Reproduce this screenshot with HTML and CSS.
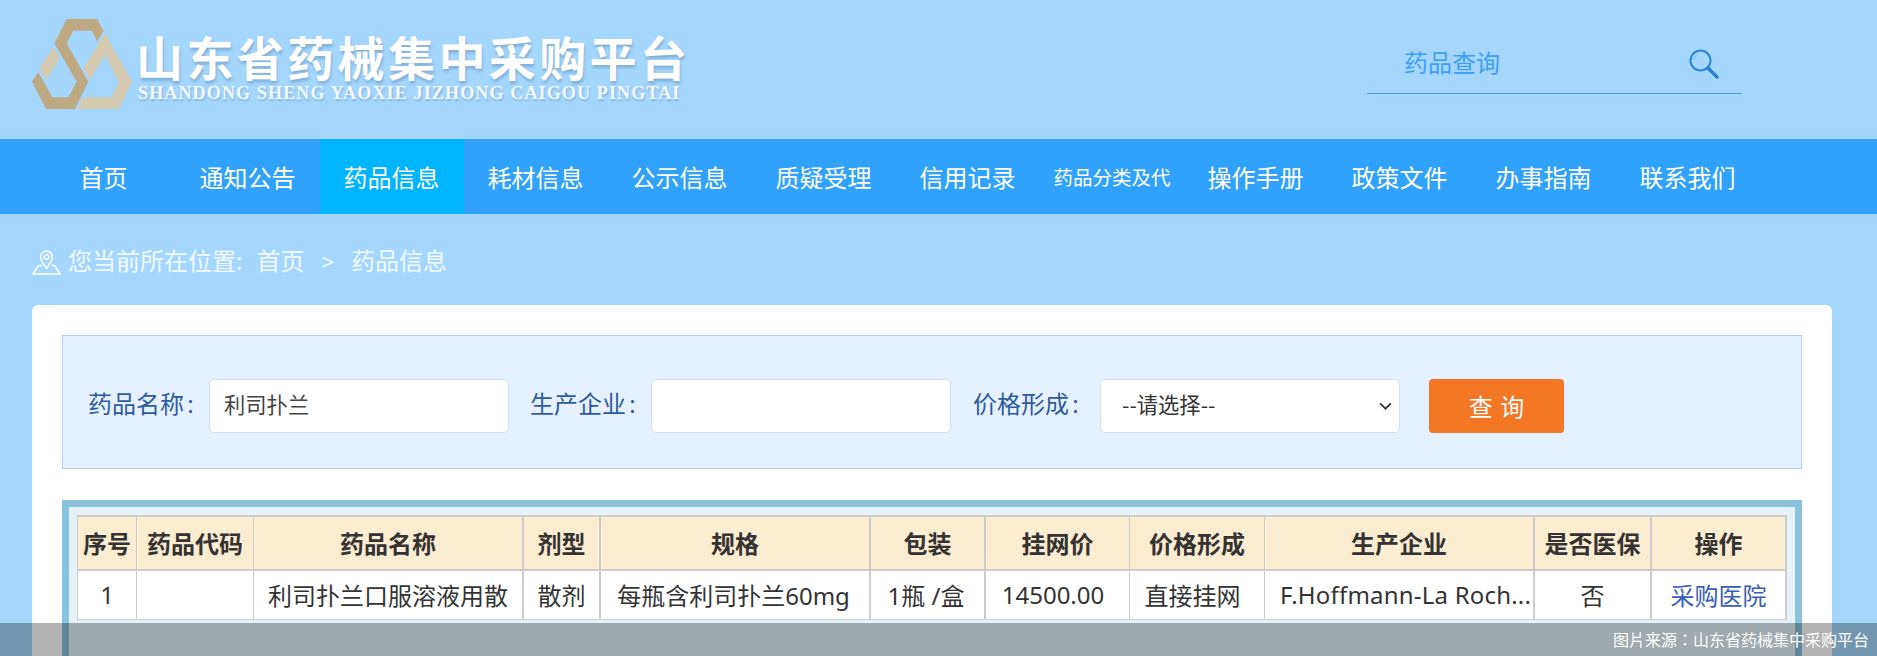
FILE: index.html
```html
<!DOCTYPE html>
<html lang="zh-CN">
<head>
<meta charset="utf-8">
<title>山东省药械集中采购平台</title>
<link rel="stylesheet" href="styles.css">
</head>
<body>
<div class="page">
  <header class="top">
    <div class="brand">
      <svg class="logo" viewBox="36 27 300 270" aria-hidden="true">
        <path class="logo-dark" d="M140 27L232 27L250 62L232 95L215 62L160 62L140 100L205 215L165 297L78 297L36 215L55 187L97 262L145 262L170 215L103 100Z"/>
        <path class="logo-light" d="M100 110L118 145L78 210L58 178Z"/>
        <path class="logo-light" d="M255 70L336 215L297 297L170 297L190 262L275 262L297 215L255 135L210 210L190 175Z"/>
      </svg>
      <div class="brand-text">
        <div class="brand-cn">山东省药械集中采购平台</div>
        <div class="brand-en">SHANDONG SHENG YAOXIE JIZHONG CAIGOU PINGTAI</div>
      </div>
    </div>
    <div class="site-search">
      <span class="site-search-text">药品查询</span>
      <svg class="search-icon" viewBox="0 0 30 30" aria-hidden="true">
        <circle cx="11.5" cy="11.5" r="10" fill="none" stroke="#2a87d8" stroke-width="2"/>
        <path d="M4.8 11A6.5 6.5 0 0 1 10 5.2" fill="none" stroke="#7dbdec" stroke-width="1"/>
        <path d="M19 19L28 28" fill="none" stroke="#2a7fcf" stroke-width="3.4" stroke-linecap="round"/>
      </svg>
    </div>
  </header>

  <nav class="nav">
    <a class="nav-item">首页</a>
    <a class="nav-item">通知公告</a>
    <a class="nav-item active">药品信息</a>
    <a class="nav-item">耗材信息</a>
    <a class="nav-item">公示信息</a>
    <a class="nav-item">质疑受理</a>
    <a class="nav-item">信用记录</a>
    <a class="nav-item small">药品分类及代</a>
    <a class="nav-item">操作手册</a>
    <a class="nav-item">政策文件</a>
    <a class="nav-item">办事指南</a>
    <a class="nav-item">联系我们</a>
  </nav>

  <div class="crumbs">
    <svg class="pin" viewBox="0 0 29 25" aria-hidden="true">
      <path d="M14.5 18.5C11 13.5 8.6 10.500 8.600 7A5.900 5.900 0 0 1 20.400 7C20.400 10.500 18 13.500 14.500 18.500Z" fill="none" stroke="#fff" stroke-width="1.500"/>
      <circle cx="14.500" cy="7" r="2.300" fill="none" stroke="#fff" stroke-width="1.300"/>
      <path d="M9.500 15.500H6.500L1 24H28L22.500 15.500H19.500" fill="none" stroke="#fff" stroke-width="1.500"/>
    </svg>
    <span class="crumb-lead">您当前所在位置:</span>
    <span class="crumb">首页</span>
    <span class="crumb-sep">&gt;</span>
    <span class="crumb">药品信息</span>
  </div>

  <main class="panel">
    <form class="filter">
      <label class="filter-label">药品名称 :</label>
      <input class="filter-input" type="text" value="利司扑兰">
      <label class="filter-label">生产企业 :</label>
      <input class="filter-input" type="text">
      <label class="filter-label wide">价格形成 :</label>
      <span class="select-wrap">
        <select class="filter-input filter-select"><option>--请选择--</option></select>
        <svg class="select-arrow" viewBox="0 0 12 7" aria-hidden="true"><path d="M1 1L6 6L11 1" fill="none" stroke="#333" stroke-width="1.600"/></svg>
      </span>
      <button class="filter-btn" type="button">查 询</button>
    </form>

    <section class="result">
      <table class="grid">
        <colgroup>
          <col class="c1"><col class="c2"><col class="c3"><col class="c4"><col class="c5"><col class="c6"><col class="c7"><col class="c8"><col class="c9"><col class="c10"><col class="c11">
        </colgroup>
        <thead>
          <tr>
            <th>序号</th><th>药品代码</th><th class="thick">药品名称</th><th class="thick">剂型</th><th class="thick">规格</th><th class="thick">包装</th><th>挂网价</th><th>价格形成</th><th class="thick">生产企业</th><th class="thick">是否医保</th><th class="thick">操作</th>
          </tr>
        </thead>
        <tbody>
          <tr>
            <td>1</td><td></td><td class="thick">利司扑兰口服溶液用散</td><td class="thick">散剂</td><td class="thick nudge">每瓶含利司扑兰60mg</td><td class="thick nudge">1瓶 /盒</td><td class="nudge-more">14500.00</td><td class="nudge-more">直接挂网</td><td class="thick clip">F.Hoffmann-La Roch...</td><td class="thick">否</td><td class="thick"><a class="row-link">采购医院</a></td>
          </tr>
        </tbody>
      </table>
    </section>
  </main>

  <div class="caption" lang="zh-TW">图片来源：山东省药械集中采购平台</div>
</div>
</body>
</html>
```

FILE: styles.css
```css
* { box-sizing: border-box; }
html, body { margin: 0; padding: 0; height: 656px; overflow: hidden; }
body { font-family: "Noto Sans", "Noto Sans CJK SC", sans-serif; background: #a5d7fe; color: #333; }
.page { position: relative; height: 656px; overflow: hidden; }

.top { height: 139px; display: flex; justify-content: space-between; padding: 19px 135px 0 32px; }
.brand { display: flex; align-items: flex-start; }
.logo { width: 100px; height: 90px; flex: none; }
.logo-dark { fill: #bfa983; }
.logo-light { fill: #d5cbb1; }
.brand-text { margin-left: 4px; padding-top: 11px; }
.brand-cn { font-family: "Noto Sans CJK SC", sans-serif; font-weight: 700; font-size: 47px; line-height: 52px; letter-spacing: 3.4px; color: #fff; white-space: nowrap; text-shadow: 1px 3px 3px rgba(90, 130, 170, .45); }
.brand-en { font-family: "Liberation Serif", serif; font-weight: 700; font-size: 18px; line-height: 20px; margin: 1px 0 0 2px; letter-spacing: 1.150px; color: #f4f9ff; white-space: nowrap; text-shadow: 1px 2px 2px rgba(90, 130, 170, .4); }

.site-search { width: 375px; height: 75px; padding: 26px 23px 0 37px; border-bottom: 1px solid #3c9ff0; display: flex; justify-content: space-between; align-items: flex-start; }
.site-search-text { font-size: 24px; line-height: 36px; color: #3d9ff6; }
.search-icon { width: 30px; height: 30px; margin-top: 4px; }

.nav { height: 75px; padding-left: 32px; background: #30a2fc; display: flex; }
.nav-item { width: 144px; padding-right: 1px; display: flex; align-items: center; justify-content: center; color: #fff; font-size: 24px; white-space: nowrap; }
.nav-item.active { background: #00b4ff; }
.nav-item.small { font-size: 19.500px; padding: 0; }

.crumbs { height: 91px; padding: 29px 0 0 32px; display: flex; align-items: flex-start; color: #f2f9ff; font-size: 24px; line-height: 36px; }
.pin { width: 29px; height: 25px; margin: 7px 7px 0 0; flex: none; }
.crumb-lead { margin-right: 14px; }
.crumb-sep { margin: 0 17px; font-size: 22px; }

.panel { margin: 0 45px 0 32px; height: 500px; padding: 30px 30px 0; background: #fff; border-radius: 6px 6px 0 0; }
.filter { height: 134px; padding: 8px 0 0 25px; display: flex; align-items: center; background: #e6f1ff; border: 1px solid #b1cdf6; }
.filter-label { width: 121px; flex: none; margin-bottom: 8px; font-size: 24px; word-spacing: -3px; color: #2c5c9e; white-space: nowrap; }
.filter-label.wide { width: 127px; margin-left: 1px; }
.filter-input { width: 300px; height: 54px; flex: none; margin-right: 21px; padding: 0 14px 6px; background: #fff; border: 1px solid #cfe0f7; border-radius: 5px; font-family: "Noto Sans CJK SC", sans-serif; font-size: 21.300px; color: #444; outline: none; }
.select-wrap { position: relative; display: block; flex: none; width: 300px; height: 54px; margin-right: 29px; }
.filter-select { display: block; margin: 0; padding-left: 21px; color: #333; appearance: none; -webkit-appearance: none; }
.select-arrow { position: absolute; right: 8px; top: 23px; width: 13px; height: 8px; }
.filter-btn { width: 135px; height: 54px; flex: none; padding: 0 0 2px; background: #f27623; color: #fff; border: 0; border-radius: 4px; font-family: "Noto Sans CJK SC", sans-serif; font-size: 24px; word-spacing: 2px; }

.result { margin-top: 31px; height: 300px; padding: 8px 8px 0 8px; background: #e6f2f8; border: 7px solid #8ac3de; }
.grid { width: 1709px; table-layout: fixed; border-collapse: separate; border-spacing: 0; border-top: 2px solid #ccc; border-left: 1px solid #ccc; font-size: 24px; }
.c1 { width: 59px; } .c2 { width: 117px; } .c3 { width: 270px; } .c4 { width: 77px; } .c5 { width: 270px; } .c6 { width: 115px; }
.c7 { width: 144px; } .c8 { width: 135px; } .c9 { width: 270px; } .c10 { width: 117px; } .c11 { width: 135px; }
.grid th, .grid td { padding: 0 0 2px; text-align: center; white-space: nowrap; border-right: 1px solid #ccc; color: #333; }
.grid th { height: 54px; background: #fcecd0; font-weight: 700; border-bottom: 2px solid #ccc; }
.grid td { height: 49px; background: #fff; border-bottom: 1px solid #ccc; }
.grid th.thick, .grid td.thick { border-right-width: 2px; }
.grid td.nudge { padding-right: 3px; }
.grid td.nudge-more { padding-right: 9px; }
.grid td.clip { padding-left: 15px; text-align: left; letter-spacing: .2px; }
.row-link { color: #3560b8; }

.caption { position: absolute; left: 0; right: 0; bottom: 0; height: 33px; padding-right: 8px; background: rgba(0, 0, 0, .3); color: #fff; font-family: "Noto Sans CJK TC", sans-serif; font-size: 16px; line-height: 33px; text-align: right; }
```
